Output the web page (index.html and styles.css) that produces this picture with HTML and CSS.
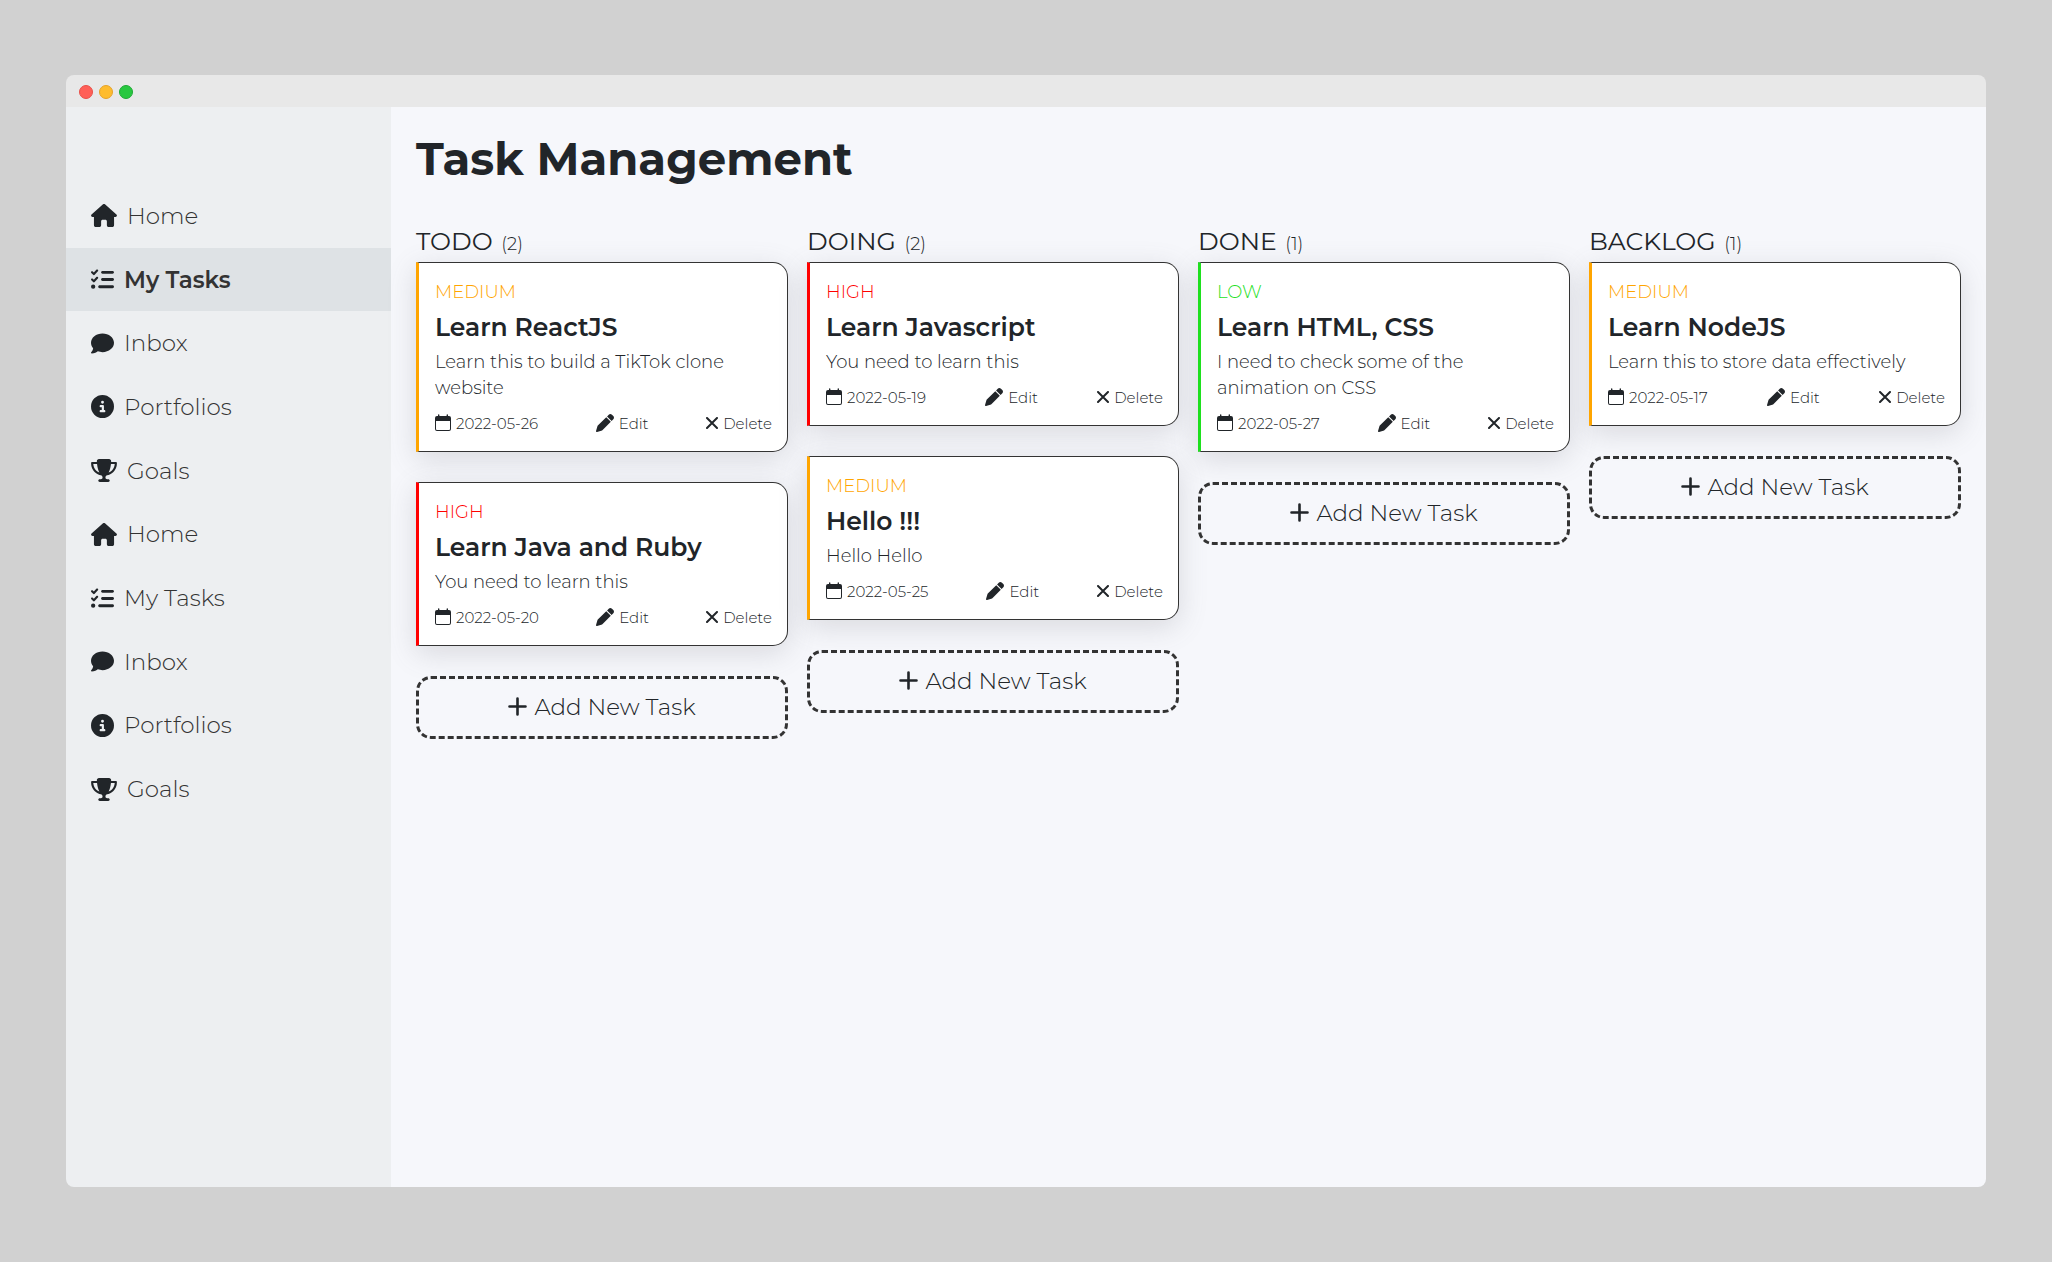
FILE: index.html
```html
<!DOCTYPE html>
<html lang="en">
<head>
<meta charset="utf-8">
<meta name="viewport" content="width=device-width, initial-scale=1">
<title>Task Management</title>
<link rel="stylesheet" href="styles.css">
</head>
<body>
<svg class="sprite" aria-hidden="true">
  <symbol id="i-home" viewBox="0 0 576 512"><path d="M575.8 255.5c0 18-15 32.1-32 32.1h-32l.7 160.2c0 2.7-.2 5.4-.5 8.1V472c0 22.1-17.9 40-40 40H392c-22.1 0-40-17.9-40-40V384c0-17.7-14.3-32-32-32H256c-17.7 0-32 14.3-32 32v88c0 22.1-17.9 40-40 40H104c-22.1 0-40-17.9-40-40V287.6H32c-18 0-32-14-32-32.1c0-9 3-17 10-24L266.4 8c7-7 15-8 22-8s15 2 21 7L564.8 231.5c8 7 12 15 11 24z"/></symbol>
  <symbol id="i-tasks" viewBox="0 0 512 512"><path d="M152.1 38.2c9.9 8.9 10.7 24 1.8 33.9l-72 80c-4.4 4.9-10.6 7.8-17.2 7.9s-12.9-2.4-17.6-7L7 113C-2.3 103.6-2.3 88.4 7 79s24.6-9.4 33.9 0l22.1 22.1 55.1-61.2c8.9-9.9 24-10.7 33.9-1.8zm0 160c9.9 8.9 10.7 24 1.8 33.9l-72 80c-4.4 4.9-10.6 7.8-17.2 7.9s-12.9-2.4-17.6-7L7 273c-9.4-9.4-9.4-24.6 0-33.9s24.6-9.4 33.9 0l22.1 22.1 55.1-61.2c8.9-9.9 24-10.7 33.9-1.8zM224 96c0-17.7 14.3-32 32-32H480c17.7 0 32 14.3 32 32s-14.3 32-32 32H256c-17.7 0-32-14.3-32-32zm0 160c0-17.7 14.3-32 32-32H480c17.7 0 32 14.3 32 32s-14.3 32-32 32H256c-17.7 0-32-14.3-32-32zM160 416c0-17.7 14.3-32 32-32H480c17.7 0 32 14.3 32 32s-14.3 32-32 32H192c-17.7 0-32-14.3-32-32zM48 368a48 48 0 1 1 0 96 48 48 0 1 1 0-96z"/></symbol>
  <symbol id="i-inbox" viewBox="0 0 512 512"><path d="M512 240c0 114.9-114.6 208-256 208c-37.1 0-72.3-6.4-104.1-17.9c-11.9 8.7-31.3 20.6-54.3 30.6C73.6 471.1 44.7 480 16 480c-6.5 0-12.3-3.9-14.8-9.9c-2.5-6-1.1-12.8 3.4-17.4c10-10 17-20 21.7-28.7c10-16.6 19.5-38.4 21.4-62.9C17.7 326.8 0 285.1 0 240C0 125.1 114.6 32 256 32s256 93.1 256 208z"/></symbol>
  <symbol id="i-info" viewBox="0 0 512 512"><path d="M256 512A256 256 0 1 0 256 0a256 256 0 1 0 0 512zM216 336h24V272H216c-13.3 0-24-10.7-24-24s10.7-24 24-24h48c13.3 0 24 10.7 24 24v88h8c13.3 0 24 10.7 24 24s-10.7 24-24 24H216c-13.3 0-24-10.7-24-24s10.7-24 24-24zm40-208a32 32 0 1 1 0 64 32 32 0 1 1 0-64z"/></symbol>
  <symbol id="i-goals" viewBox="0 0 576 512"><path d="M400 0H176c-26.5 0-48.1 21.8-47.1 48.2c.2 5.3 .4 10.6 .7 15.8H24C10.7 64 0 74.7 0 88c0 92.6 33.5 157 78.5 200.7c44.3 43.1 98.3 64.8 138.1 75.8c23.4 6.5 39.4 26 39.4 45.6c0 20.9-17 37.9-37.9 37.9H192c-17.7 0-32 14.3-32 32s14.3 32 32 32H384c17.7 0 32-14.3 32-32s-14.3-32-32-32H357.9C337 448 320 431 320 410.1c0-19.6 15.9-39.2 39.4-45.6c39.9-11 93.9-32.7 138.2-75.8C542.5 245 576 180.6 576 88c0-13.3-10.7-24-24-24H446.4c.3-5.2 .5-10.4 .7-15.8C448.1 21.8 426.5 0 400 0zM48.9 112h84.4c9.1 90.1 29.2 150.3 51.9 190.6c-24.9-11-50.8-26.5-73.2-48.3c-32-31.1-58-76-63-142.3zM464.1 254.3c-22.4 21.8-48.3 37.3-73.2 48.3c22.7-40.3 42.8-100.5 51.9-190.6h84.4c-5.1 66.3-31.1 111.2-63 142.3z"/></symbol>
  <symbol id="i-date" viewBox="0 0 16 18"><path fill-rule="evenodd" d="M3 1a.7.7 0 0 1 1.4 0v1h7.200v-1a.7.7 0 0 1 1.4 0v1h1a2 2 0 0 1 2 2v11a2 2 0 0 1-2 2H2a2 2 0 0 1-2-2V4a2 2 0 0 1 2-2h1zM1 7v8a1 1 0 0 0 1 1h12a1 1 0 0 0 1-1V7z"/></symbol>
  <symbol id="i-edit" viewBox="0 0 512 512"><path d="M362.7 19.3L314.3 67.7 444.3 197.7l48.4-48.4c25-25 25-65.5 0-90.5L453.3 19.3c-25-25-65.5-25-90.5 0zm-71 71L58.6 323.5c-10.4 10.4-18 23.3-22.2 37.4L1 481.2C-1.5 489.7 .8 498.8 7 505s15.3 8.5 23.7 6.1l120.3-35.4c14.1-4.2 27-11.8 37.4-22.2L421.7 220.3 291.7 90.3z"/></symbol>
  <symbol id="i-delete" viewBox="0 0 12 12"><path d="M1 1l10 10M11 1L1 11" fill="none" stroke="currentColor" stroke-width="2" stroke-linecap="round"/></symbol>
  <symbol id="i-plus" viewBox="0 0 19 19"><path d="M9.5 1.500v16M1.500 9.500h16" fill="none" stroke="currentColor" stroke-width="2.600" stroke-linecap="round"/></symbol>
</svg>
<div class="window">
  <div class="titlebar"><span class="dot close"></span><span class="dot minimize"></span><span class="dot expand"></span></div>
  <div class="app">
    <nav class="sidebar" aria-label="Main">
      <div class="nav-list">
        <a class="nav-link" href="#"><svg class="icon wide"><use href="#i-home"/></svg>Home</a>
        <a class="nav-link active" href="#" aria-current="page"><svg class="icon"><use href="#i-tasks"/></svg>My Tasks</a>
        <a class="nav-link" href="#"><svg class="icon"><use href="#i-inbox"/></svg>Inbox</a>
        <a class="nav-link" href="#"><svg class="icon"><use href="#i-info"/></svg>Portfolios</a>
        <a class="nav-link" href="#"><svg class="icon wide"><use href="#i-goals"/></svg>Goals</a>
        <a class="nav-link" href="#"><svg class="icon wide"><use href="#i-home"/></svg>Home</a>
        <a class="nav-link" href="#"><svg class="icon"><use href="#i-tasks"/></svg>My Tasks</a>
        <a class="nav-link" href="#"><svg class="icon"><use href="#i-inbox"/></svg>Inbox</a>
        <a class="nav-link" href="#"><svg class="icon"><use href="#i-info"/></svg>Portfolios</a>
        <a class="nav-link" href="#"><svg class="icon wide"><use href="#i-goals"/></svg>Goals</a>
      </div>
    </nav>
    <main class="content">
      <h1 class="page-title">Task Management</h1>
      <div class="board">
        <section class="column">
          <h2 class="column-title">TODO <span class="count">(2)</span></h2>
          <article class="card medium">
            <p class="priority">MEDIUM</p>
            <h3 class="card-title">Learn ReactJS</h3>
            <p class="description">Learn this to build a TikTok clone website</p>
            <div class="card-footer">
              <span class="meta"><svg class="icon-date"><use href="#i-date"/></svg>2022-05-26</span>
              <button class="meta" type="button"><svg class="icon-edit"><use href="#i-edit"/></svg>Edit</button>
              <button class="meta" type="button"><svg class="icon-delete"><use href="#i-delete"/></svg>Delete</button>
            </div>
          </article>
          <article class="card high">
            <p class="priority">HIGH</p>
            <h3 class="card-title">Learn Java and Ruby</h3>
            <p class="description">You need to learn this</p>
            <div class="card-footer">
              <span class="meta"><svg class="icon-date"><use href="#i-date"/></svg>2022-05-20</span>
              <button class="meta" type="button"><svg class="icon-edit"><use href="#i-edit"/></svg>Edit</button>
              <button class="meta" type="button"><svg class="icon-delete"><use href="#i-delete"/></svg>Delete</button>
            </div>
          </article>
          <button class="add-task" type="button"><svg class="icon-plus"><use href="#i-plus"/></svg>Add New Task</button>
        </section>
        <section class="column">
          <h2 class="column-title">DOING <span class="count">(2)</span></h2>
          <article class="card high">
            <p class="priority">HIGH</p>
            <h3 class="card-title">Learn Javascript</h3>
            <p class="description">You need to learn this</p>
            <div class="card-footer">
              <span class="meta"><svg class="icon-date"><use href="#i-date"/></svg>2022-05-19</span>
              <button class="meta" type="button"><svg class="icon-edit"><use href="#i-edit"/></svg>Edit</button>
              <button class="meta" type="button"><svg class="icon-delete"><use href="#i-delete"/></svg>Delete</button>
            </div>
          </article>
          <article class="card medium">
            <p class="priority">MEDIUM</p>
            <h3 class="card-title">Hello !!!</h3>
            <p class="description">Hello Hello</p>
            <div class="card-footer">
              <span class="meta"><svg class="icon-date"><use href="#i-date"/></svg>2022-05-25</span>
              <button class="meta" type="button"><svg class="icon-edit"><use href="#i-edit"/></svg>Edit</button>
              <button class="meta" type="button"><svg class="icon-delete"><use href="#i-delete"/></svg>Delete</button>
            </div>
          </article>
          <button class="add-task" type="button"><svg class="icon-plus"><use href="#i-plus"/></svg>Add New Task</button>
        </section>
        <section class="column">
          <h2 class="column-title">DONE <span class="count">(1)</span></h2>
          <article class="card low">
            <p class="priority">LOW</p>
            <h3 class="card-title">Learn HTML, CSS</h3>
            <p class="description">I need to check some of the animation on CSS</p>
            <div class="card-footer">
              <span class="meta"><svg class="icon-date"><use href="#i-date"/></svg>2022-05-27</span>
              <button class="meta" type="button"><svg class="icon-edit"><use href="#i-edit"/></svg>Edit</button>
              <button class="meta" type="button"><svg class="icon-delete"><use href="#i-delete"/></svg>Delete</button>
            </div>
          </article>
          <button class="add-task" type="button"><svg class="icon-plus"><use href="#i-plus"/></svg>Add New Task</button>
        </section>
        <section class="column">
          <h2 class="column-title">BACKLOG <span class="count">(1)</span></h2>
          <article class="card medium">
            <p class="priority">MEDIUM</p>
            <h3 class="card-title">Learn NodeJS</h3>
            <p class="description">Learn this to store data effectively</p>
            <div class="card-footer">
              <span class="meta"><svg class="icon-date"><use href="#i-date"/></svg>2022-05-17</span>
              <button class="meta" type="button"><svg class="icon-edit"><use href="#i-edit"/></svg>Edit</button>
              <button class="meta" type="button"><svg class="icon-delete"><use href="#i-delete"/></svg>Delete</button>
            </div>
          </article>
          <button class="add-task" type="button"><svg class="icon-plus"><use href="#i-plus"/></svg>Add New Task</button>
        </section>
      </div>
    </main>
  </div>
</div>
</body>
</html>
```
FILE: styles.css
```css
* {
  box-sizing: border-box;
}

body {
  margin: 0;
  min-height: 100vh;
  padding: 75px 66px;
  display: flex;
  background: #d1d1d1;
  color: #212529;
  font-family: Montserrat, Inter, sans-serif;
  font-weight: 300;
}

h1, h2, h3, p {
  margin: 0;
}

button {
  margin: 0;
  padding: 0;
  border: 0;
  background: none;
  color: inherit;
  font: inherit;
  cursor: pointer;
}

svg {
  display: block;
  flex: none;
  fill: currentColor;
}

.sprite {
  display: none;
}

.window {
  flex: 1;
  display: flex;
  flex-direction: column;
  border-radius: 8px;
  overflow: hidden;
}

.titlebar {
  display: flex;
  align-items: center;
  gap: 6px;
  height: 32px;
  padding: 2px 13px 0;
  background: #e8e8e8;
}

.dot {
  width: 14px;
  height: 14px;
  border-radius: 50%;
  border: 1px solid;
}

.close {
  background: #ff5f57;
  border-color: #e94f48;
}

.minimize {
  background: #febc2e;
  border-color: #e5a32a;
}

.expand {
  background: #28c840;
  border-color: #1fa935;
}

.app {
  flex: 1;
  display: flex;
}

.sidebar {
  flex: none;
  width: 325px;
  padding-top: 77px;
  background: #edeff1;
}

.nav-list {
  display: grid;
  grid-auto-rows: 1fr;
  height: 637px;
}

.nav-link {
  display: flex;
  align-items: center;
  gap: 10px;
  padding: 0 25px;
  color: #333;
  font-size: 23px;
  text-decoration: none;
}

.nav-link.active {
  background: #dee2e5;
  font-weight: 600;
}

.icon {
  width: 23px;
  height: 23px;
  color: #212529;
}

.icon.wide {
  width: 26px;
}

.content {
  flex: 1;
  min-width: 0;
  padding: 19px 25px;
  background: #f6f7fb;
}

.page-title {
  font-size: 45px;
  font-weight: 700;
  line-height: 66px;
}

.board {
  display: grid;
  grid-template-columns: repeat(4, minmax(0, 1fr));
  align-items: start;
  gap: 19px;
  margin-top: 34px;
}

.column {
  display: flex;
  flex-direction: column;
  gap: 30px;
}

.column-title {
  margin-bottom: -24px;
  font-size: 25px;
  font-weight: 400;
  line-height: 30px;
}

.count {
  margin-left: 2px;
  font-size: 18px;
  font-weight: 300;
  line-height: 1;
}

.card {
  padding: 16px 15px 15px 16px;
  border: 1px solid #333;
  border-left: 3px solid;
  border-radius: 0 15px 15px 0;
  background: #fff;
  box-shadow: 0 7px 29px rgba(100, 100, 111, 0.2);
}

.medium {
  border-left-color: orange;
}

.high {
  border-left-color: red;
}

.low {
  border-left-color: #1ee01e;
}

.priority {
  font-size: 18px;
  line-height: 26px;
}

.medium .priority {
  color: orange;
}

.high .priority {
  color: red;
}

.low .priority {
  color: #1ee01e;
}

.card-title {
  padding: 6px 0;
  font-size: 25px;
  font-weight: 600;
  line-height: 32px;
}

.description {
  font-size: 18px;
  line-height: 26px;
}

.card-footer {
  display: flex;
  align-items: center;
  justify-content: space-between;
  padding-top: 11px;
}

.meta {
  display: flex;
  align-items: center;
  gap: 5px;
  font-size: 15px;
  line-height: 24px;
}

.meta svg {
  margin-bottom: 2px;
}

.icon-date {
  width: 16px;
  height: 18px;
}

.icon-edit {
  width: 18px;
  height: 18px;
}

.icon-delete {
  width: 12px;
  height: 12px;
}

.add-task {
  display: flex;
  align-items: center;
  justify-content: center;
  gap: 7px;
  height: 63px;
  padding-bottom: 2px;
  border: 3px dashed #333;
  border-radius: 15px;
  font-size: 23px;
}

.icon-plus {
  width: 19px;
  height: 19px;
}
```
